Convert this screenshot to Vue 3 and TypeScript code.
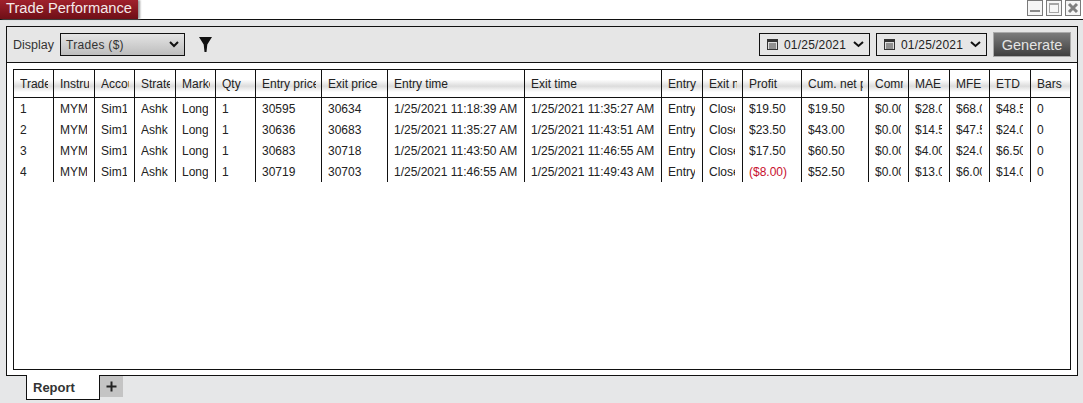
<script setup lang="ts">
interface Col { name: string; width: number }
const cols: Col[] = [
  { name: 'Trade-number', width: 40 }, { name: 'Instrument', width: 41 }, { name: 'Account', width: 40 },
  { name: 'Strategy', width: 41 }, { name: 'Market pos.', width: 40 }, { name: 'Qty', width: 40 },
  { name: 'Entry price', width: 66 }, { name: 'Exit price', width: 66 }, { name: 'Entry time', width: 137 },
  { name: 'Exit time', width: 137 }, { name: 'Entry name', width: 41 }, { name: 'Exit name', width: 40 },
  { name: 'Profit', width: 59 }, { name: 'Cum. net profit', width: 67 }, { name: 'Commission', width: 40 },
  { name: 'MAE', width: 41 }, { name: 'MFE', width: 40 }, { name: 'ETD', width: 41 }, { name: 'Bars', width: 40 },
]
const rows: string[][] = [
  ['1','MYM','Sim101','Ashkan','Long','1','30595','30634','1/25/2021 11:18:39 AM','1/25/2021 11:35:27 AM','Entry','Close','$19.50','$19.50','$0.00','$28.00','$68.00','$48.50','0'],
  ['2','MYM','Sim101','Ashkan','Long','1','30636','30683','1/25/2021 11:35:27 AM','1/25/2021 11:43:51 AM','Entry','Close','$23.50','$43.00','$0.00','$14.50','$47.50','$24.00','0'],
  ['3','MYM','Sim101','Ashkan','Long','1','30683','30718','1/25/2021 11:43:50 AM','1/25/2021 11:46:55 AM','Entry','Close','$17.50','$60.50','$0.00','$4.00','$24.00','$6.50','0'],
  ['4','MYM','Sim101','Ashkan','Long','1','30719','30703','1/25/2021 11:46:55 AM','1/25/2021 11:49:43 AM','Entry','Close','($8.00)','$52.50','$0.00','$13.00','$6.00','$14.00','0'],
]
const dates = ['01/25/2021', '01/25/2021']
</script>

<template>
  <div class="app">
    <header class="titlebar">
      <div class="title">Trade Performance</div>
      <div class="winbtns">
        <span class="wb"><svg width="16" height="16" viewBox="0 0 16 16"><rect x="3" y="10" width="10" height="2" fill="#8a8a8a" /></svg></span>
        <span class="wb"><svg width="16" height="16" viewBox="0 0 16 16"><rect x="3.500" y="3.500" width="9" height="9" fill="none" stroke="#a5a5a5" /><rect x="3" y="3" width="10" height="2" fill="#a5a5a5" /></svg></span>
        <span class="wb"><svg width="16" height="16" viewBox="0 0 16 16"><path d="M4 4l8 8M12 4l-8 8" stroke="#808080" stroke-width="3" /></svg></span>
      </div>
    </header>

    <main class="panel">
      <div class="toolbar">
        <span class="display">Display</span>
        <div class="select">
          <span>Trades ($)</span>
          <svg width="10" height="7" viewBox="0 0 10 7"><path d="M1 1l4 4 4-4" fill="none" stroke="#111" stroke-width="2" /></svg>
        </div>
        <svg class="funnel" width="13" height="15" viewBox="0 0 13 15"><path d="M0 0h13L8.300 7.500 7.500 15h-2L4.700 7.500z" fill="#111" /></svg>
        <div class="spacer"></div>
        <div v-for="(d, i) in dates" :key="i" class="date">
          <svg width="11" height="11" viewBox="0 0 11 11">
            <rect x="0.500" y="0.500" width="10" height="10" fill="#ddd" stroke="#333" />
            <rect x="1" y="1" width="9" height="2" fill="#333" />
            <path d="M2 5h7M2 7h7M2 9h7" stroke="#444" />
          </svg>
          <span class="date-text">{{ d }}</span>
          <svg width="11" height="7" viewBox="0 0 11 7"><path d="M1 1l4.500 4 4.500-4" fill="none" stroke="#111" stroke-width="2" /></svg>
        </div>
        <button class="generate" type="button">Generate</button>
      </div>

      <div class="gridwrap">
        <table class="grid">
          <colgroup>
            <col v-for="c in cols" :key="c.name" :style="{ width: c.width + 'px' }" />
          </colgroup>
          <thead>
            <tr><th v-for="c in cols" :key="c.name"><div class="clip">{{ c.name }}</div></th></tr>
          </thead>
          <tbody>
            <tr v-for="r in rows" :key="r[0]">
              <td v-for="(v, i) in r" :key="i" :class="{ neg: v.startsWith('(') }"><div class="clip">{{ v }}</div></td>
            </tr>
          </tbody>
        </table>
      </div>
    </main>

    <footer class="tabs">
      <div class="tab">Report</div>
      <div class="plus">
        <svg width="11" height="11" viewBox="0 0 11 11"><path d="M5.500 0.500v10M0.500 5.500h10" stroke="#222" stroke-width="2" /></svg>
      </div>
    </footer>
  </div>
</template>

<style scoped>
.app {
  width: 1083px;
  height: 403px;
  display: flex;
  flex-direction: column;
  overflow: hidden;
  background: #e6e7e8;
  font-family: "Liberation Sans", Arial, sans-serif;
  font-size: 12px;
  color: #222;
}
.titlebar {
  height: 20px;
  flex: none;
  display: flex;
  justify-content: space-between;
  background: #fff;
  border-bottom: 1px solid #111;
  box-sizing: border-box;
}
.title {
  width: 138px;
  height: 19px;
  padding-left: 6px;
  box-sizing: border-box;
  background: linear-gradient(#a0212c, #6f0f17);
  box-shadow: 2px 0 2px #999;
  color: #f4eaea;
  font-size: 14.700px;
  line-height: 16px;
}
.winbtns {
  display: flex;
  gap: 3px;
  padding-right: 2px;
}
.wb {
  width: 16px;
  height: 16px;
  border: 1px solid #7a7a7a;
  box-sizing: border-box;
  display: flex;
  align-items: center;
  justify-content: center;
  overflow: hidden;
  background: #f6f6f6;
}
.wb svg { flex: none; }
.panel {
  margin: 6px 5px 0 6px;
  height: 350px;
  flex: none;
  box-sizing: border-box;
  border: 1px solid #111;
  background: #fff;
  display: flex;
  flex-direction: column;
}
.toolbar {
  height: 36px;
  flex: none;
  box-sizing: border-box;
  border-bottom: 1px solid #111;
  background: #e6e6e6;
  display: flex;
  align-items: center;
  padding: 0 6px;
}
.display {
  width: 47px;
  font-size: 12.500px;
  overflow: hidden;
  white-space: nowrap;
  color: #333;
}
.select {
  width: 125px;
  height: 23px;
  box-sizing: border-box;
  border: 1px solid #111;
  background: linear-gradient(#e4e4e4, #bdbdbd);
  display: flex;
  align-items: center;
  justify-content: space-between;
  padding: 0 5px;
  color: #333;
  letter-spacing: 0.300px;
}
.funnel { margin-left: 14px; }
.spacer { flex: 1; }
.date {
  width: 111px;
  height: 23px;
  box-sizing: border-box;
  border: 1px solid #111;
  margin-right: 6px;
  background: #e6e6e6;
  display: flex;
  align-items: center;
  padding: 0 5px 0 7px;
  color: #222;
}
.date-text {
  flex: 1;
  margin-left: 6px;
  letter-spacing: 0.200px;
}
.generate {
  width: 78px;
  height: 25px;
  padding: 0;
  border: 1px solid #aaa;
  background: linear-gradient(#7c7c7c, #3f3f3f);
  color: #e4e4e4;
  font: 14.500px "Liberation Sans", Arial, sans-serif;
}
.gridwrap {
  margin: 6px 6px 0 6px;
  height: 301px;
  box-sizing: border-box;
  border: 1px solid #111;
  background: #fff;
  overflow: hidden;
}
.grid {
  table-layout: fixed;
  width: 1056px;
  border-collapse: separate;
  border-spacing: 0;
}
th, td {
  padding: 0;
  font-weight: 400;
  text-align: left;
  border-right: 1px solid #111;
  color: #222;
}
th:last-child, td:last-child { border-right: none; }
th {
  height: 27px;
  border-bottom: 1px solid #111;
  background: linear-gradient(#fff 35%, #dcdcdc 60%, #fff 82%);
}
td { height: 21px; }
.clip {
  margin: 0 5px 0 6px;
  overflow: hidden;
  white-space: nowrap;
}
td .clip { margin-right: 7px; }
td.neg { color: #c8102e; }
.tabs {
  display: flex;
  align-items: flex-start;
  padding-left: 26px;
  margin-top: -1px;
  flex: 1;
}
.tab {
  width: 74px;
  height: 25px;
  box-sizing: border-box;
  background: #fff;
  border: 1px solid #111;
  border-top: none;
  padding: 5px 0 0 6px;
  font-weight: 700;
  font-size: 13px;
  color: #333;
  position: relative;
}
.plus {
  width: 23px;
  height: 21px;
  margin-top: 1px;
  background: #c4c4c4;
  display: flex;
  align-items: center;
  justify-content: center;
}
</style>
